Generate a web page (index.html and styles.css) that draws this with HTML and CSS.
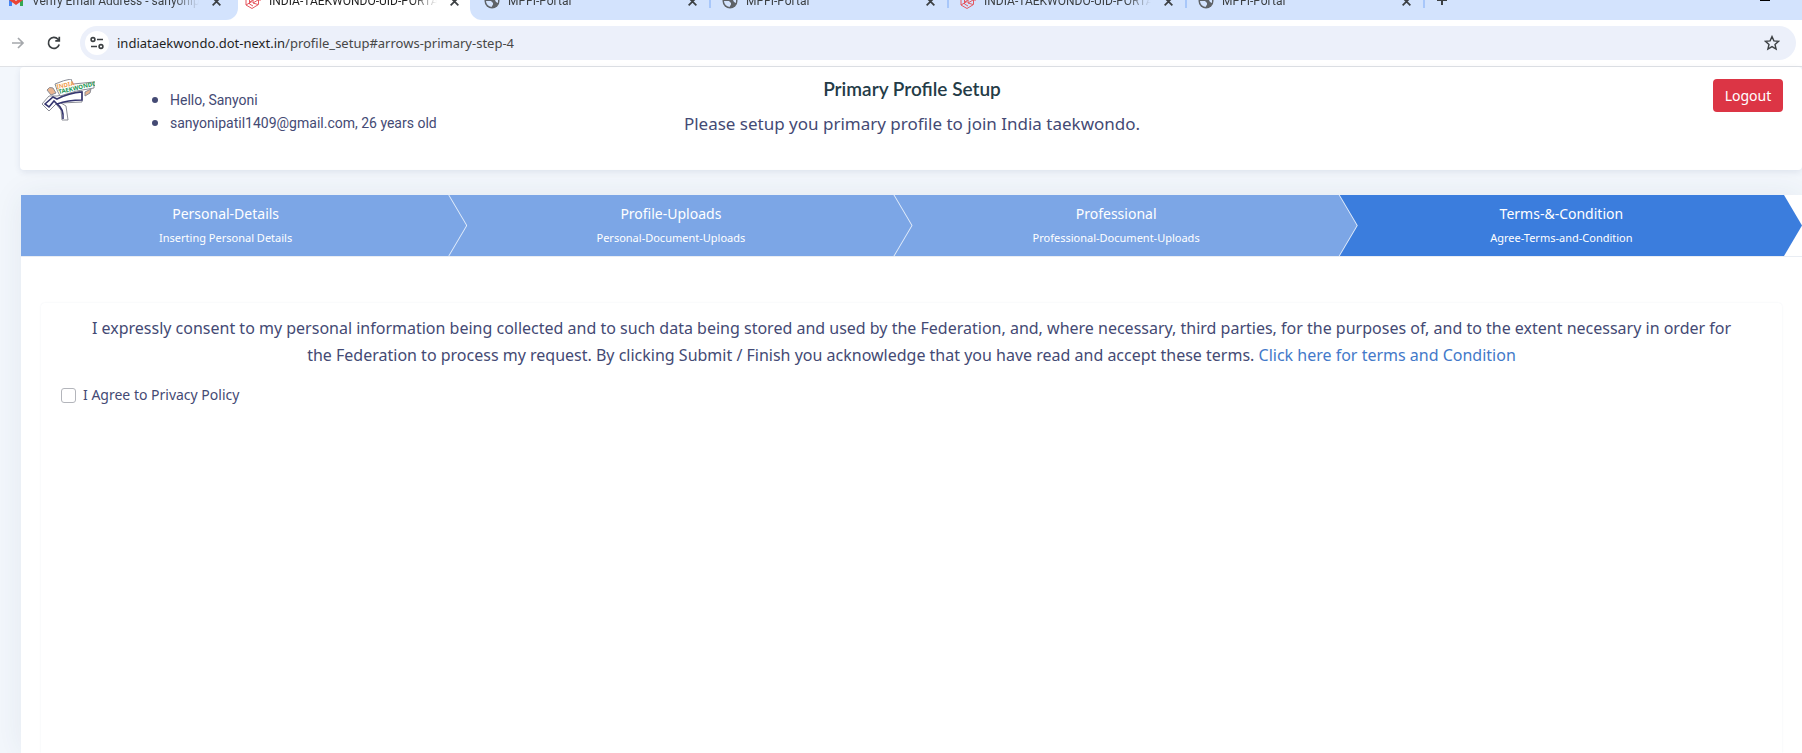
FILE: index.html
```
<!DOCTYPE html>
<html lang="en">
<head>
    <meta charset="UTF-8">
    <meta name="viewport" content="width=device-width, initial-scale=1.0">
    <title>INDIA-TAEKWONDO-UID-PORTAL</title>
    <link rel="stylesheet" href="styles.css">
</head>
<body>

    <svg class="symbols" aria-hidden="true">
        <symbol id="globe" viewBox="0 0 16 16">
            <circle cx="8" cy="8" r="7.500" fill="#5f6368"/>
            <path d="M2 8h5l2 2v1.500L7.500 14A6 6 0 0 1 2 8zM8 2h3l3 4v4l-2-1-1-2H8.500L6.500 5z" fill="#d3e3fd"/>
        </symbol>
        <symbol id="laravel" viewBox="0 0 16 16">
            <path d="M1 3l3.500-2L8 3v7l5-3V4l2-1v5M1 3v9l6 3.500 6.500-4V7M1 3l3.500 2L8 3M4.500 5v6l3.500 2M8 7l5-3M8 10l5 1.500M4.500 9L8 7M1 12l6-3.500" fill="none" stroke="#e5575f" stroke-width="1"/>
        </symbol>
        <symbol id="close" viewBox="0 0 10 10">
            <path d="M1.500 1.500l7 7M8.500 1.500l-7 7" fill="none" stroke="#3c4043" stroke-width="1.600"/>
        </symbol>
    </svg>

    <!-- Browser tabs -->
    <div class="tab-strip">
        <div class="tab first">
            <svg class="favicon" viewBox="0 0 16 16"><path d="M1 3v10h3V6z" fill="#4285f4"/><path d="M15 3v10h-3V6z" fill="#34a853"/><path d="M1 3l7 5 7-5v4l-7 5-7-5z" fill="#ea4335"/></svg>
            <span class="tab-title">Verify Email Address - sanyonipatil</span>
            <button class="tab-close" aria-label="Close tab"><svg><use href="#close"/></svg></button>
        </div>
        <div class="tab active">
            <svg class="favicon"><use href="#laravel"/></svg>
            <span class="tab-title">INDIA-TAEKWONDO-UID-PORTAL</span>
            <button class="tab-close" aria-label="Close tab"><svg><use href="#close"/></svg></button>
        </div>
        <div class="tab-group">
            <div class="tab">
                <svg class="favicon"><use href="#globe"/></svg>
                <span class="tab-title">MPFI-Portal</span>
                <button class="tab-close" aria-label="Close tab"><svg><use href="#close"/></svg></button>
            </div>
            <div class="tab">
                <svg class="favicon"><use href="#globe"/></svg>
                <span class="tab-title">MPFI-Portal</span>
                <button class="tab-close" aria-label="Close tab"><svg><use href="#close"/></svg></button>
            </div>
            <div class="tab">
                <svg class="favicon"><use href="#laravel"/></svg>
                <span class="tab-title">INDIA-TAEKWONDO-UID-PORTAL</span>
                <button class="tab-close" aria-label="Close tab"><svg><use href="#close"/></svg></button>
            </div>
            <div class="tab">
                <svg class="favicon"><use href="#globe"/></svg>
                <span class="tab-title">MPFI-Portal</span>
                <button class="tab-close" aria-label="Close tab"><svg><use href="#close"/></svg></button>
            </div>
            <button class="new-tab" aria-label="New tab"><svg viewBox="0 0 12 12"><path d="M6 1v10M1 6h10" stroke="#3c4043" stroke-width="2"/></svg></button>
            <button class="minimize" aria-label="Minimize"></button>
        </div>
    </div>

    <!-- Address bar -->
    <div class="toolbar">
        <button class="nav-btn" aria-label="Forward"><svg viewBox="0 0 16 16"><path d="M2 8h11M8 3l5 5-5 5" fill="none" stroke="#a5a8ac" stroke-width="1.700"/></svg></button>
        <button class="nav-btn" aria-label="Reload"><svg viewBox="0 0 16 16"><path d="M13.200 9.500A5.500 5.500 0 1 1 12 4.200L13 5.300M13.300 1.800v4h-4" fill="none" stroke="#3c4043" stroke-width="1.700"/></svg></button>
        <div class="address">
            <span class="site-info"><svg viewBox="0 0 16 16"><g fill="none" stroke="#3c4043" stroke-width="1.600"><circle cx="4" cy="4.500" r="1.900"/><path d="M8 4.500h6M2 11.500h6"/><circle cx="12" cy="11.500" r="1.900"/></g></svg></span>
            <div class="url"><span class="host">indiataekwondo.dot-next.in</span>/profile_setup#arrows-primary-step-4</div>
            <button class="star" aria-label="Bookmark this tab"><svg viewBox="0 0 16 16"><path d="M8 1.600l1.900 4.300 4.700.4-3.600 3.100 1.100 4.600L8 11.600 3.900 14 5 9.400 1.400 6.300l4.700-.4z" fill="none" stroke="#3c4043" stroke-width="1.400"/></svg></button>
        </div>
    </div>

    <div class="page">
        <!-- Header -->
        <header class="header">
            <svg class="logo" viewBox="0 0 54 42" role="img" aria-label="India Taekwondo">
                <g stroke="#8b8d96" stroke-width="1" stroke-linejoin="round">
                    <path d="M8 17L1 25l7 7 7-7 5 6 1 10h6l-2-14-5-3 21-1V12L16 17z" fill="#fff"/>
                    <path d="M14 5q9-4 16-5l2 5 21-2v6q-18 2-34 8l-3-6z" fill="#fff"/>
                    <path d="M6 11q2-4 6-2l3 5-5 2z" fill="#e9b48f"/>
                    <path d="M44 13l6-3-1 4-5 3z" fill="#e9b48f"/>
                </g>
                <path d="M4 25l8-7 4 2q12-6 25-7v8q-14 0-25 4l-3-3-5 6zM16 25q7 5 6 15" fill="none" stroke="#34356f" stroke-width="1.600"/>
                <text x="16" y="10" class="logo-text" fill="#f09a4a" transform="rotate(-12 16 10)">INDIA</text>
                <text x="18" y="15" class="logo-text" fill="#219653" transform="rotate(-13 18 15)">TAEKWONDO</text>
            </svg>
            <ul class="user-info">
                <li>Hello, Sanyoni</li>
                <li>sanyonipatil1409@gmail.com, 26 years old</li>
            </ul>
            <div class="intro">
                <h1>Primary Profile Setup</h1>
                <p>Please setup you primary profile to join India taekwondo.</p>
            </div>
            <div class="actions"><button class="logout">Logout</button></div>
        </header>

        <!-- Profile wizard -->
        <main class="wizard">
            <ul class="steps">
                <li><a href="#arrows-primary-step-1">Personal-Details<small>Inserting Personal Details</small></a></li>
                <li><a href="#arrows-primary-step-2">Profile-Uploads<small>Personal-Document-Uploads</small></a></li>
                <li><a href="#arrows-primary-step-3">Professional<small>Professional-Document-Uploads</small></a></li>
                <li class="current"><a href="#arrows-primary-step-4">Terms-&amp;-Condition<small>Agree-Terms-and-Condition</small></a></li>
            </ul>
            <section class="panel">
                <p class="consent">I expressly consent to my personal information being collected and to such data being stored and used by the Federation, and, where necessary, third parties, for the purposes of, and to the extent necessary in order for the Federation to process my request. By clicking Submit / Finish you acknowledge that you have read and accept these terms. <a href="#terms">Click here for terms and Condition</a></p>
                <div class="agree">
                    <input type="checkbox" id="privacy">
                    <label for="privacy">I Agree to Privacy Policy</label>
                </div>
            </section>
        </main>
    </div>

</body>
</html>
```
FILE: styles.css
```
* {
    box-sizing: border-box;
}

body {
    display: flex;
    flex-direction: column;
    min-height: 100vh;
    margin: 0;
    overflow: hidden;
    font-family: "Noto Sans", sans-serif;
    font-size: 14px;
    color: #444a74;
    background-color: #f3f7fc;
}

button {
    padding: 0;
    border: none;
    background: none;
    font-family: inherit;
    cursor: pointer;
}

svg {
    display: block;
}

.symbols {
    position: absolute;
    width: 0;
    height: 0;
}

/* Browser tabs */
.tab-strip {
    display: flex;
    height: 20px;
    overflow: hidden;
    font-family: Roboto, sans-serif;
    background-color: #fff;
}

.tab {
    position: relative;
    display: flex;
    align-items: center;
    width: 238px;
    height: 18px;
    margin-top: -8px;
    padding: 0 10px 0 14px;
    font-size: 12px;
    color: #3c4043;
}

.tab.first {
    height: 28px;
    padding: 0 16px 10px 8px;
    border-radius: 0 0 12px 0;
    background-color: #d3e3fd;
}

.tab.active {
    width: 232px;
    padding: 0 10px 0 7px;
    color: #1f1f1f;
}

.tab-group {
    display: flex;
    flex: 1;
    border-radius: 0 0 0 12px;
    background-color: #d3e3fd;
}

.tab-group .tab::after {
    content: "";
    position: absolute;
    right: -3px;
    bottom: 2px;
    width: 2px;
    height: 8px;
    background-color: #a8c7fa;
}

.favicon {
    flex: none;
    width: 16px;
    height: 16px;
    margin-right: 8px;
}

.tab-title {
    flex: 1;
    overflow: hidden;
    margin-right: 12px;
    line-height: 20px;
    white-space: nowrap;
    mask-image: linear-gradient(to right, #000 85%, transparent);
}

.tab-close svg {
    width: 11px;
    height: 11px;
}

.new-tab {
    height: 12px;
    margin: -6px 0 0 14px;
}

.new-tab svg {
    width: 12px;
    height: 12px;
}

.minimize {
    width: 10px;
    height: 1px;
    margin: 0 32px 0 auto;
    background-color: #000;
}

/* Address bar */
.toolbar {
    display: flex;
    align-items: center;
    gap: 16px;
    height: 47px;
    padding: 0 6px 1px 8px;
    border-bottom: 1px solid #e0e2e6;
    background-color: #fff;
}

.nav-btn svg {
    width: 20px;
    height: 16px;
}

.address {
    display: flex;
    flex: 1;
    align-items: center;
    height: 34px;
    padding: 0 16px 0 5px;
    border-radius: 17px;
    background-color: #ecf0fa;
}

.site-info {
    display: grid;
    place-items: center;
    width: 24px;
    height: 24px;
    border-radius: 50%;
    background-color: #fff;
}

.site-info svg,
.star svg {
    width: 16px;
    height: 16px;
}

.url {
    flex: 1;
    margin-left: 8px;
    font-size: 13px;
    color: #474747;
}

.host {
    color: #1f1f1f;
}

/* Header */
.page {
    display: flex;
    flex: 1;
    flex-direction: column;
    gap: 25px;
    padding-left: 20px;
}

.header {
    display: grid;
    grid-template-columns: 90px 1fr 2fr 1fr 90px;
    height: 103px;
    padding: 12px 19px 0 21px;
    border-radius: 4px;
    background-color: #fff;
    box-shadow: 0 2px 6px rgba(40, 60, 110, 0.1);
}

.logo {
    width: 54px;
    height: 42px;
}

.logo-text {
    font-size: 6px;
    font-weight: 700;
}

.user-info {
    margin: 8px 0 0;
    padding-left: 39px;
    font-family: Roboto, sans-serif;
    line-height: 23px;
    white-space: nowrap;
}

.user-info li {
    height: 23px;
}

.user-info li::marker {
    font-size: 18px;
}

.intro {
    text-align: center;
}

.intro h1 {
    margin: 0;
    font-family: Lato, sans-serif;
    font-size: 19px;
    font-weight: 600;
    line-height: 20px;
    color: #243b47;
}

.intro p {
    margin: 12px 0 0;
    font-size: 17px;
    line-height: 26px;
}

.actions {
    grid-column: 5;
    text-align: right;
}

.logout {
    width: 70px;
    height: 33px;
    border-radius: 4px;
    font-size: 14px;
    color: #fff;
    background-color: #dc3545;
}

/* Wizard steps */
.wizard {
    display: flex;
    flex: 1;
    flex-direction: column;
    margin-left: 1px;
    background-color: #fff;
    box-shadow: 0 0 30px rgba(40, 60, 90, 0.08);
}

.steps {
    display: flex;
    margin: 0;
    padding: 0;
    list-style: none;
    border-bottom: 1px solid #e9edf3;
}

.steps li {
    position: relative;
    z-index: 4;
    flex: 1;
}

.steps li:nth-child(2) {
    z-index: 3;
}

.steps li:nth-child(3) {
    z-index: 2;
}

.steps li:nth-child(4) {
    z-index: 1;
}

/* thin line that follows the arrow */
.steps li:not(:last-child)::before {
    content: "";
    position: absolute;
    top: 0;
    right: -1px;
    width: 19px;
    height: 100%;
    background-color: #e6effb;
    clip-path: polygon(0 0, 1px 0, 100% 50%, 1px 100%, 0 100%);
}

.steps a {
    position: relative;
    display: block;
    height: 61px;
    padding: 7px 36px 0 0;
    line-height: 24px;
    text-align: center;
    text-decoration: none;
    color: #fff;
    background-color: #7ca6e6;
    clip-path: polygon(0 0, calc(100% - 18px) 0, 100% 50%, calc(100% - 18px) 100%, 0 100%);
}

.steps li + li a {
    margin-left: -18px;
    padding-left: 18px;
}

.steps .current a {
    background-color: #3b7ddd;
}

.steps small {
    display: block;
    font-size: 11px;
}

/* Terms */
.panel {
    flex: 1;
    margin: 46px 20px 0;
    padding: 12px 20px 0;
    border-radius: 4px 4px 0 0;
    box-shadow: 0 0 2px rgba(40, 60, 110, 0.08);
}

.consent {
    margin: 0;
    padding: 0 24px;
    font-size: 16px;
    line-height: 27px;
    text-align: center;
}

.consent a {
    text-decoration: none;
    color: #4379c9;
}

.agree {
    display: flex;
    align-items: center;
    gap: 7px;
    margin-top: 14px;
    line-height: 24px;
}

.agree input {
    appearance: none;
    width: 15px;
    height: 15px;
    margin: 0;
    border: 1px solid #b3b5bb;
    border-radius: 3px;
    background-color: #fff;
}

.agree input:checked {
    border-color: #3b7ddd;
    background-color: #3b7ddd;
}
```
